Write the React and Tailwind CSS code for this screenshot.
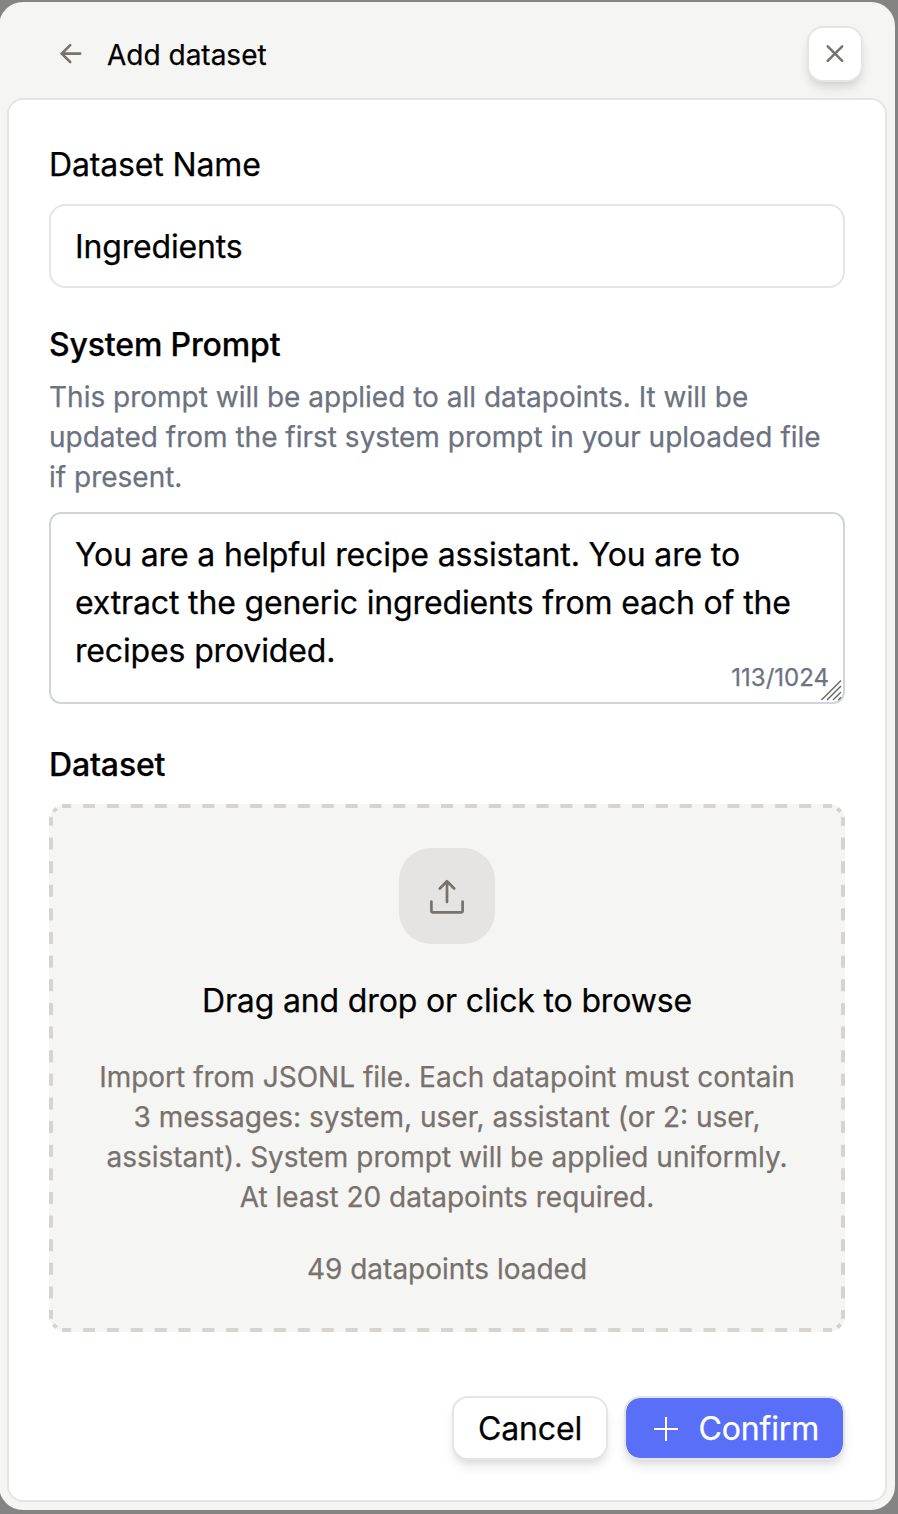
function DashedOutline() {
  return (
    <svg
      className="pointer-events-none absolute inset-0"
      width="796"
      height="528"
      viewBox="0 0 796 528"
      fill="none"
      stroke="#d6d3d1"
      strokeWidth="4"
      aria-hidden="true"
    >
      <path d="M13 2H783M13 526H783" strokeDasharray="12 11.87" strokeDashoffset="2.87" />
      <path d="M2 13V515M794 13V515" strokeDasharray="12 11.63" strokeDashoffset="3.13" />
      <path d="M4.4 7.6L7.6 4.4M788.4 4.4L791.6 7.6M4.4 520.4L7.6 523.6M788.4 523.6L791.6 520.4" />
    </svg>
  );
}

function Field({ label, children, className }) {
  return (
    <section className={className}>
      <h2 className="text-[32px] leading-[48px] font-medium tracking-[-0.15px]">{label}</h2>
      {children}
    </section>
  );
}

export default function App() {
  return (
    <main className="h-[1514px] w-[898px] overflow-hidden bg-[#848484] pt-[2px] font-['Inter',sans-serif] text-black [-webkit-text-stroke:0.25px]">
      <div className="-ml-px flex h-[1508px] w-[896px] flex-col rounded-[24px] bg-[#f5f5f4] pr-2 pb-2 pl-2">
        <header className="flex h-24 shrink-0 items-center pt-2 pr-6 pl-[50px]">
          <button className="flex size-7 items-center justify-center" aria-label="Back">
            <svg width="28" height="28" viewBox="0 0 28 28" fill="none" stroke="#78716c" strokeWidth="2.6" strokeLinecap="round" strokeLinejoin="round">
              <path d="M23.2 13.6H4.5M13.2 5.2L4.7 13.6L13.2 22" />
            </svg>
          </button>
          <h1 className="ml-[22px] pt-0.5 text-[28px] leading-10">Add dataset</h1>
          <button className="ml-auto flex size-[56px] items-center justify-center rounded-2xl border-2 border-[#e7e5e4] bg-white shadow-[0_8px_12px_-2px_rgba(0,0,0,0.1),0_4px_8px_-4px_rgba(0,0,0,0.1)]" aria-label="Close">
            <svg width="28" height="28" viewBox="0 0 28 28" fill="none" stroke="#78716c" strokeWidth="2.5" strokeLinecap="round">
              <path d="M6.7 6.4L21.2 20.9M21.2 6.4L6.7 20.9" />
            </svg>
          </button>
        </header>

        <div className="flex flex-1 flex-col rounded-2xl border-2 border-[#e5e5e4] bg-white px-10 pt-[41px]">
          <section>
            <h2 className="text-[32px] leading-[48px] tracking-[-0.15px]">Dataset Name</h2>
            <div className="mt-[15px] flex h-[84px] items-center rounded-2xl border-2 border-[#e5e5e4] px-6 pt-0.5 text-[32px] leading-[48px] tracking-[-0.15px]">
              Ingredients
            </div>
          </section>

          <Field label="System Prompt" className="mt-[33px]">
            <p className="mt-2 text-[28px] leading-10 text-[#6b7280]">
              This prompt will be applied to all datapoints. It will be
              <br />
              updated from the first system prompt in your uploaded file
              <br />
              if present.
            </p>
            <div className="relative mt-[15px] h-48 rounded-xl border-2 border-[#d1d5db] px-6 pt-[17px] text-[32px] leading-[48px]">
              <p className="tracking-[-0.15px]">
                You are a helpful recipe assistant. You are to
                <br />
                extract the generic ingredients from each of the
                <br />
                recipes provided.
              </p>
              <span className="absolute right-[14px] bottom-2 text-[24px] leading-8 text-[#6b7280]">113/1024</span>
              <svg className="absolute right-[1px] bottom-px" width="22" height="22" viewBox="0 0 22 22" stroke="#6b6b66" strokeWidth="1.5">
                <path d="M1.5 21L21 1.5M7 21L21 7M13 21L21 13M18.3 21L21 18.3" />
              </svg>
            </div>
          </Field>

          <Field label="Dataset" className="mt-[37px]">
            <div className="relative mt-[15px] flex h-[528px] flex-col items-center rounded-2xl bg-[#f5f5f4] pt-11 text-center">
              <DashedOutline />
              <div className="flex size-24 items-center justify-center rounded-[32px] bg-[#e6e4e2]">
                <svg width="36" height="36" viewBox="0 0 36 36" fill="none" stroke="#78716c" strokeWidth="2.7" strokeLinecap="round" strokeLinejoin="round">
                  <path d="M18 24V3.3M10.8 10.5L18 3.3L25.2 10.5M2.4 23.5V33.2Q2.4 34.3 3.5 34.3H32.5Q33.6 34.3 33.6 33.2V23.5" />
                </svg>
              </div>
              <p className="mt-[33px] text-[32px] leading-[48px] tracking-[-0.15px]">Drag and drop or click to browse</p>
              <p className="mt-8 text-[28px] leading-10 text-[#78716c]">
                Import from JSONL file. Each datapoint must contain
                <br />
                3 messages: system, user, assistant (or 2: user,
                <br />
                assistant). System prompt will be applied uniformly.
                <br />
                At least 20 datapoints required.
              </p>
              <p className="mt-8 text-[28px] leading-10 text-[#78716c]">49 datapoints loaded</p>
            </div>
          </Field>

          <footer className="mt-16 flex justify-end gap-4">
            <button className="flex h-16 w-[156px] items-center justify-center rounded-2xl border-2 border-[#e7e5e4] bg-white pt-0.5 text-[32px] tracking-[-0.15px] shadow-[0_8px_12px_-2px_rgba(0,0,0,0.1),0_4px_8px_-4px_rgba(0,0,0,0.1)]">
              Cancel
            </button>
            <button className="flex h-16 w-[221px] items-center rounded-2xl border-2 border-[#e7e5e4] bg-[#596ff7] bg-clip-padding pt-0.5 pl-[27px] text-[32px] tracking-[-0.15px] text-white shadow-[0_8px_12px_-2px_rgba(0,0,0,0.1),0_4px_8px_-4px_rgba(0,0,0,0.1)]">
              <svg className="mr-[19.5px]" width="26" height="26" viewBox="0 0 26 26" fill="none" stroke="white" strokeWidth="2">
                <path d="M13 1V25M1 13H25" />
              </svg>
              Confirm
            </button>
          </footer>
        </div>
      </div>
    </main>
  );
}
